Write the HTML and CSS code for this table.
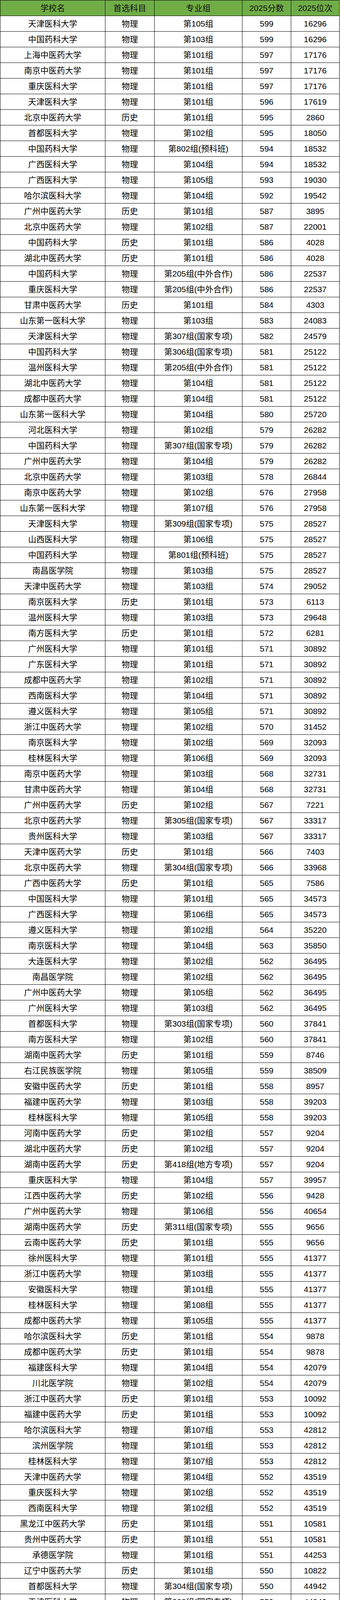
FILE: index.html
```html
<!DOCTYPE html>
<html lang="zh-CN">
<head>
<meta charset="utf-8">
<title>医科院校分数线</title>
<link rel="stylesheet" href="styles.css">
</head>
<body>
<table class="score-table">
<thead>
<tr><th>学校名</th><th>首选科目</th><th>专业组</th><th>2025分数</th><th>2025位次</th></tr>
</thead>
<tbody id="rows">
<tr><td>天津医科大学</td><td>物理</td><td>第105组</td><td>599</td><td>16296</td></tr>
<tr><td>中国药科大学</td><td>物理</td><td>第103组</td><td>599</td><td>16296</td></tr>
<tr><td>上海中医药大学</td><td>物理</td><td>第101组</td><td>597</td><td>17176</td></tr>
<tr><td>南京中医药大学</td><td>物理</td><td>第101组</td><td>597</td><td>17176</td></tr>
<tr><td>重庆医科大学</td><td>物理</td><td>第101组</td><td>597</td><td>17176</td></tr>
<tr><td>天津医科大学</td><td>物理</td><td>第101组</td><td>596</td><td>17619</td></tr>
<tr><td>北京中医药大学</td><td>历史</td><td>第101组</td><td>595</td><td>2860</td></tr>
<tr><td>首都医科大学</td><td>物理</td><td>第102组</td><td>595</td><td>18050</td></tr>
<tr><td>中国药科大学</td><td>物理</td><td>第802组(预科班)</td><td>594</td><td>18532</td></tr>
<tr><td>广西医科大学</td><td>物理</td><td>第104组</td><td>594</td><td>18532</td></tr>
<tr><td>广西医科大学</td><td>物理</td><td>第105组</td><td>593</td><td>19030</td></tr>
<tr><td>哈尔滨医科大学</td><td>物理</td><td>第104组</td><td>592</td><td>19542</td></tr>
<tr><td>广州中医药大学</td><td>历史</td><td>第101组</td><td>587</td><td>3895</td></tr>
<tr><td>北京中医药大学</td><td>物理</td><td>第102组</td><td>587</td><td>22001</td></tr>
<tr><td>中国药科大学</td><td>历史</td><td>第101组</td><td>586</td><td>4028</td></tr>
<tr><td>湖北中医药大学</td><td>历史</td><td>第101组</td><td>586</td><td>4028</td></tr>
<tr><td>中国药科大学</td><td>物理</td><td>第205组(中外合作)</td><td>586</td><td>22537</td></tr>
<tr><td>重庆医科大学</td><td>物理</td><td>第205组(中外合作)</td><td>586</td><td>22537</td></tr>
<tr><td>甘肃中医药大学</td><td>历史</td><td>第101组</td><td>584</td><td>4303</td></tr>
<tr><td>山东第一医科大学</td><td>物理</td><td>第103组</td><td>583</td><td>24083</td></tr>
<tr><td>天津医科大学</td><td>物理</td><td>第307组(国家专项)</td><td>582</td><td>24579</td></tr>
<tr><td>中国药科大学</td><td>物理</td><td>第306组(国家专项)</td><td>581</td><td>25122</td></tr>
<tr><td>温州医科大学</td><td>物理</td><td>第205组(中外合作)</td><td>581</td><td>25122</td></tr>
<tr><td>湖北中医药大学</td><td>物理</td><td>第104组</td><td>581</td><td>25122</td></tr>
<tr><td>成都中医药大学</td><td>物理</td><td>第104组</td><td>581</td><td>25122</td></tr>
<tr><td>山东第一医科大学</td><td>物理</td><td>第104组</td><td>580</td><td>25720</td></tr>
<tr><td>河北医科大学</td><td>物理</td><td>第102组</td><td>579</td><td>26282</td></tr>
<tr><td>中国药科大学</td><td>物理</td><td>第307组(国家专项)</td><td>579</td><td>26282</td></tr>
<tr><td>广州中医药大学</td><td>物理</td><td>第104组</td><td>579</td><td>26282</td></tr>
<tr><td>北京中医药大学</td><td>物理</td><td>第103组</td><td>578</td><td>26844</td></tr>
<tr><td>南京中医药大学</td><td>物理</td><td>第102组</td><td>576</td><td>27958</td></tr>
<tr><td>山东第一医科大学</td><td>物理</td><td>第107组</td><td>576</td><td>27958</td></tr>
<tr><td>天津医科大学</td><td>物理</td><td>第309组(国家专项)</td><td>575</td><td>28527</td></tr>
<tr><td>山西医科大学</td><td>物理</td><td>第106组</td><td>575</td><td>28527</td></tr>
<tr><td>中国药科大学</td><td>物理</td><td>第801组(预科班)</td><td>575</td><td>28527</td></tr>
<tr><td>南昌医学院</td><td>物理</td><td>第103组</td><td>575</td><td>28527</td></tr>
<tr><td>天津中医药大学</td><td>物理</td><td>第103组</td><td>574</td><td>29052</td></tr>
<tr><td>南京医科大学</td><td>历史</td><td>第101组</td><td>573</td><td>6113</td></tr>
<tr><td>温州医科大学</td><td>物理</td><td>第103组</td><td>573</td><td>29648</td></tr>
<tr><td>南方医科大学</td><td>历史</td><td>第101组</td><td>572</td><td>6281</td></tr>
<tr><td>广州医科大学</td><td>物理</td><td>第101组</td><td>571</td><td>30892</td></tr>
<tr><td>广东医科大学</td><td>物理</td><td>第101组</td><td>571</td><td>30892</td></tr>
<tr><td>成都中医药大学</td><td>物理</td><td>第102组</td><td>571</td><td>30892</td></tr>
<tr><td>西南医科大学</td><td>物理</td><td>第104组</td><td>571</td><td>30892</td></tr>
<tr><td>遵义医科大学</td><td>物理</td><td>第105组</td><td>571</td><td>30892</td></tr>
<tr><td>浙江中医药大学</td><td>物理</td><td>第102组</td><td>570</td><td>31452</td></tr>
<tr><td>南京医科大学</td><td>物理</td><td>第102组</td><td>569</td><td>32093</td></tr>
<tr><td>桂林医科大学</td><td>物理</td><td>第106组</td><td>569</td><td>32093</td></tr>
<tr><td>南京中医药大学</td><td>物理</td><td>第103组</td><td>568</td><td>32731</td></tr>
<tr><td>甘肃中医药大学</td><td>物理</td><td>第104组</td><td>568</td><td>32731</td></tr>
<tr><td>广州中医药大学</td><td>历史</td><td>第102组</td><td>567</td><td>7221</td></tr>
<tr><td>北京中医药大学</td><td>物理</td><td>第305组(国家专项)</td><td>567</td><td>33317</td></tr>
<tr><td>贵州医科大学</td><td>物理</td><td>第103组</td><td>567</td><td>33317</td></tr>
<tr><td>天津中医药大学</td><td>历史</td><td>第101组</td><td>566</td><td>7403</td></tr>
<tr><td>北京中医药大学</td><td>物理</td><td>第304组(国家专项)</td><td>566</td><td>33968</td></tr>
<tr><td>广西中医药大学</td><td>历史</td><td>第101组</td><td>565</td><td>7586</td></tr>
<tr><td>中国医科大学</td><td>物理</td><td>第101组</td><td>565</td><td>34573</td></tr>
<tr><td>广西医科大学</td><td>物理</td><td>第106组</td><td>565</td><td>34573</td></tr>
<tr><td>遵义医科大学</td><td>物理</td><td>第102组</td><td>564</td><td>35220</td></tr>
<tr><td>南京医科大学</td><td>物理</td><td>第104组</td><td>563</td><td>35850</td></tr>
<tr><td>大连医科大学</td><td>物理</td><td>第102组</td><td>562</td><td>36495</td></tr>
<tr><td>南昌医学院</td><td>物理</td><td>第102组</td><td>562</td><td>36495</td></tr>
<tr><td>广州中医药大学</td><td>物理</td><td>第105组</td><td>562</td><td>36495</td></tr>
<tr><td>广州医科大学</td><td>物理</td><td>第103组</td><td>562</td><td>36495</td></tr>
<tr><td>首都医科大学</td><td>物理</td><td>第303组(国家专项)</td><td>560</td><td>37841</td></tr>
<tr><td>南方医科大学</td><td>物理</td><td>第102组</td><td>560</td><td>37841</td></tr>
<tr><td>湖南中医药大学</td><td>历史</td><td>第101组</td><td>559</td><td>8746</td></tr>
<tr><td>右江民族医学院</td><td>物理</td><td>第105组</td><td>559</td><td>38509</td></tr>
<tr><td>安徽中医药大学</td><td>历史</td><td>第101组</td><td>558</td><td>8957</td></tr>
<tr><td>福建中医药大学</td><td>物理</td><td>第103组</td><td>558</td><td>39203</td></tr>
<tr><td>桂林医科大学</td><td>物理</td><td>第105组</td><td>558</td><td>39203</td></tr>
<tr><td>河南中医药大学</td><td>历史</td><td>第102组</td><td>557</td><td>9204</td></tr>
<tr><td>湖北中医药大学</td><td>历史</td><td>第102组</td><td>557</td><td>9204</td></tr>
<tr><td>湖南中医药大学</td><td>历史</td><td>第418组(地方专项)</td><td>557</td><td>9204</td></tr>
<tr><td>重庆医科大学</td><td>物理</td><td>第104组</td><td>557</td><td>39957</td></tr>
<tr><td>江西中医药大学</td><td>历史</td><td>第102组</td><td>556</td><td>9428</td></tr>
<tr><td>广州中医药大学</td><td>物理</td><td>第106组</td><td>556</td><td>40654</td></tr>
<tr><td>湖南中医药大学</td><td>历史</td><td>第311组(国家专项)</td><td>555</td><td>9656</td></tr>
<tr><td>云南中医药大学</td><td>历史</td><td>第101组</td><td>555</td><td>9656</td></tr>
<tr><td>徐州医科大学</td><td>物理</td><td>第101组</td><td>555</td><td>41377</td></tr>
<tr><td>浙江中医药大学</td><td>物理</td><td>第103组</td><td>555</td><td>41377</td></tr>
<tr><td>安徽医科大学</td><td>物理</td><td>第101组</td><td>555</td><td>41377</td></tr>
<tr><td>桂林医科大学</td><td>物理</td><td>第108组</td><td>555</td><td>41377</td></tr>
<tr><td>成都中医药大学</td><td>物理</td><td>第105组</td><td>555</td><td>41377</td></tr>
<tr><td>哈尔滨医科大学</td><td>历史</td><td>第101组</td><td>554</td><td>9878</td></tr>
<tr><td>成都中医药大学</td><td>历史</td><td>第101组</td><td>554</td><td>9878</td></tr>
<tr><td>福建医科大学</td><td>物理</td><td>第104组</td><td>554</td><td>42079</td></tr>
<tr><td>川北医学院</td><td>物理</td><td>第102组</td><td>554</td><td>42079</td></tr>
<tr><td>浙江中医药大学</td><td>历史</td><td>第101组</td><td>553</td><td>10092</td></tr>
<tr><td>福建中医药大学</td><td>历史</td><td>第101组</td><td>553</td><td>10092</td></tr>
<tr><td>哈尔滨医科大学</td><td>物理</td><td>第107组</td><td>553</td><td>42812</td></tr>
<tr><td>滨州医学院</td><td>物理</td><td>第101组</td><td>553</td><td>42812</td></tr>
<tr><td>桂林医科大学</td><td>物理</td><td>第107组</td><td>553</td><td>42812</td></tr>
<tr><td>天津中医药大学</td><td>物理</td><td>第104组</td><td>552</td><td>43519</td></tr>
<tr><td>重庆医科大学</td><td>物理</td><td>第102组</td><td>552</td><td>43519</td></tr>
<tr><td>西南医科大学</td><td>物理</td><td>第102组</td><td>552</td><td>43519</td></tr>
<tr><td>黑龙江中医药大学</td><td>历史</td><td>第101组</td><td>551</td><td>10581</td></tr>
<tr><td>贵州中医药大学</td><td>历史</td><td>第101组</td><td>551</td><td>10581</td></tr>
<tr><td>承德医学院</td><td>物理</td><td>第101组</td><td>551</td><td>44253</td></tr>
<tr><td>辽宁中医药大学</td><td>历史</td><td>第101组</td><td>550</td><td>10822</td></tr>
<tr><td>首都医科大学</td><td>物理</td><td>第304组(国家专项)</td><td>550</td><td>44942</td></tr>
<tr><td>天津医科大学</td><td>物理</td><td>第308组(国家专项)</td><td>550</td><td>44942</td></tr>
</tbody>
</table>
</body>
</html>
```

FILE: styles.css
```css
html, body {
  margin: 0;
  padding: 0;
  background: #ffffff;
}

.score-table,
.score-table thead,
.score-table tbody {
  display: block;
}

.score-table {
  width: 870px;
  box-sizing: border-box;
  border-top: 1px solid #000000;
  border-left: 1px solid #000000;
  font-family: "Liberation Sans", "Noto Sans CJK SC", sans-serif;
  font-size: 21px;
  color: #000000;
}

.score-table tr {
  display: grid;
  grid-template-columns: 269px 126px 225px 125px 124px;
  height: 40px;
}

.score-table th,
.score-table td {
  display: flex;
  align-items: center;
  justify-content: center;
  box-sizing: border-box;
  height: 40px;
  border-right: 1px solid #000000;
  border-bottom: 1px solid #000000;
  padding: 0;
  line-height: 1;
  white-space: nowrap;
  overflow: hidden;
}

.score-table tbody tr:last-child td {
  height: 39px;
}

.score-table th {
  background: #70ad47;
  font-weight: normal;
  color: #111111;
}
```
